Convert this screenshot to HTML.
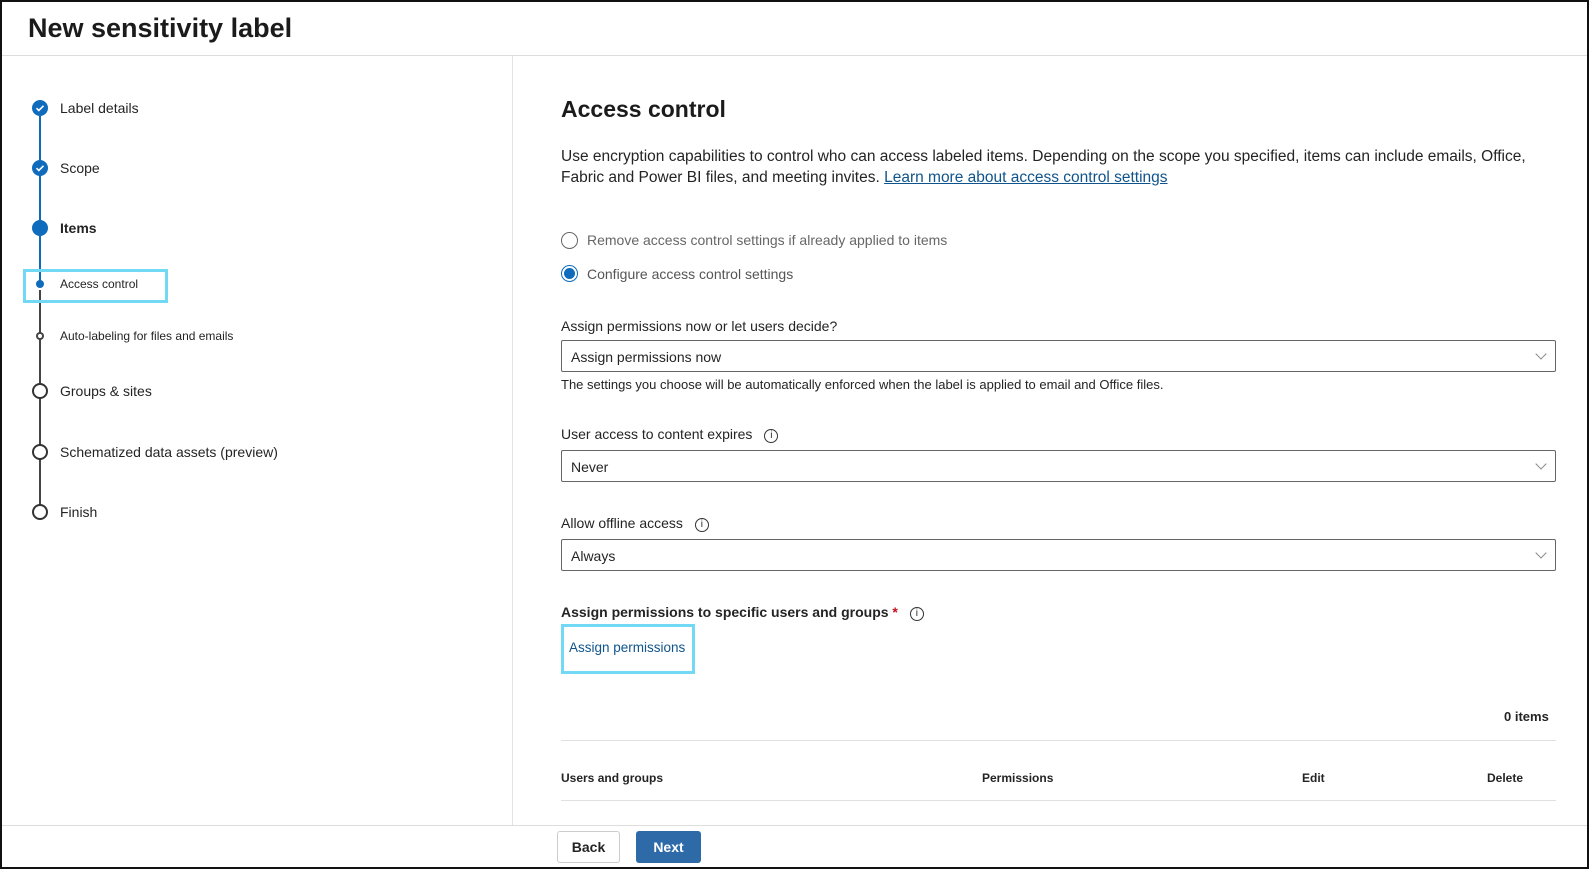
<!DOCTYPE html>
<html><head><meta charset="utf-8"><style>
*{margin:0;padding:0;box-sizing:border-box}
body{width:1589px;height:869px;position:relative;background:#fff;font-family:"Liberation Sans",sans-serif;color:#242424;overflow:hidden}
.frame{position:absolute;left:0;top:0;width:1589px;height:869px;border:2px solid #111;border-right-width:2px}
.abs{position:absolute;white-space:nowrap}
.hl{position:absolute;border:3px solid #72d9f4}
.circ{position:absolute;border-radius:50%}
.dd{position:absolute;left:561px;width:995px;height:32px;border:1px solid #666;border-radius:2px;font-size:14px;padding:8px 9px}
.dd:after{content:"";position:absolute;right:10px;top:9px;width:7px;height:7px;border-right:1px solid #888;border-bottom:1px solid #888;transform:rotate(45deg)}
.info{display:inline-block;width:14px;height:14px;border:1px solid #333;border-radius:50%;font-size:10px;text-align:center;line-height:12px;vertical-align:1px;margin-left:12px}
</style></head><body>
<div class="frame"></div>
<div class="abs" style="left:28px;top:13px;font-size:27px;font-weight:bold;color:#1b1b1b">New sensitivity label</div>
<div class="abs" style="left:2px;top:55px;width:1585px;height:1px;background:#ddd"></div>
<div class="abs" style="left:512px;top:56px;width:1px;height:770px;background:#e3e3e3"></div>
<div class="abs" style="left:2px;top:825px;width:1585px;height:1px;background:#ddd"></div>

<!-- steps -->
<div class="abs" style="left:39px;top:116px;width:2px;height:168px;background:#0f6cbd"></div>
<div class="abs" style="left:39px;top:290px;width:2px;height:222px;background:#444"></div>
<div class="circ" style="left:32px;top:100px;width:16px;height:16px;background:#0f6cbd"></div>
<svg class="abs" style="left:35px;top:103px" width="10" height="10"><path d="M1.5 5.2l2.3 2.3 4.7-4.7" stroke="#fff" stroke-width="1.6" fill="none"/></svg>
<div class="circ" style="left:32px;top:160px;width:16px;height:16px;background:#0f6cbd"></div>
<svg class="abs" style="left:35px;top:163px" width="10" height="10"><path d="M1.5 5.2l2.3 2.3 4.7-4.7" stroke="#fff" stroke-width="1.6" fill="none"/></svg>
<div class="circ" style="left:32px;top:220px;width:16px;height:16px;background:#0f6cbd"></div>
<div class="circ" style="left:36px;top:280px;width:8px;height:8px;background:#0f6cbd"></div>
<div class="circ" style="left:36px;top:332px;width:8px;height:8px;background:#fff;border:2px solid #444"></div>
<div class="circ" style="left:32px;top:383px;width:16px;height:16px;background:#fff;border:2px solid #333"></div>
<div class="circ" style="left:32px;top:444px;width:16px;height:16px;background:#fff;border:2px solid #333"></div>
<div class="circ" style="left:32px;top:504px;width:16px;height:16px;background:#fff;border:2px solid #333"></div>
<div class="abs" style="left:60px;top:100px;font-size:14px">Label details</div>
<div class="abs" style="left:60px;top:160px;font-size:14px">Scope</div>
<div class="abs" style="left:60px;top:220px;font-size:14px;font-weight:bold">Items</div>
<div class="abs" style="left:60px;top:277px;font-size:12px">Access control</div>
<div class="abs" style="left:60px;top:329px;font-size:12px">Auto-labeling for files and emails</div>
<div class="abs" style="left:60px;top:383px;font-size:14px">Groups &amp; sites</div>
<div class="abs" style="left:60px;top:444px;font-size:14px">Schematized data assets (preview)</div>
<div class="abs" style="left:60px;top:504px;font-size:14px">Finish</div>
<div class="hl" style="left:23px;top:269px;width:145px;height:34px"></div>

<!-- right -->
<div class="abs" style="left:561px;top:96px;font-size:23px;font-weight:bold;color:#1b1b1b">Access control</div>
<div class="abs" style="left:561px;top:146px;font-size:15.5px;line-height:21px">Use encryption capabilities to control who can access labeled items. Depending on the scope you specified, items can include emails, Office,<br>Fabric and Power BI files, and meeting invites. <span style="color:#0f548c;text-decoration:underline">Learn more about access control settings</span></div>
<div class="circ" style="left:561px;top:232px;width:17px;height:17px;border:1px solid #666"></div>
<div class="abs" style="left:587px;top:232px;font-size:14px;color:#666">Remove access control settings if already applied to items</div>
<div class="circ" style="left:561px;top:265px;width:17px;height:17px;border:1px solid #0f6cbd"></div>
<div class="circ" style="left:564px;top:268px;width:11px;height:11px;background:#0f6cbd"></div>
<div class="abs" style="left:587px;top:266px;font-size:14px;color:#555">Configure access control settings</div>
<div class="abs" style="left:561px;top:318px;font-size:14px">Assign permissions now or let users decide?</div>
<div class="dd" style="top:340px">Assign permissions now</div>
<div class="abs" style="left:561px;top:377px;font-size:13px">The settings you choose will be automatically enforced when the label is applied to email and Office files.</div>
<div class="abs" style="left:561px;top:426px;font-size:14px">User access to content expires<span class="info">i</span></div>
<div class="dd" style="top:450px">Never</div>
<div class="abs" style="left:561px;top:515px;font-size:14px">Allow offline access<span class="info">i</span></div>
<div class="dd" style="top:539px">Always</div>
<div class="abs" style="left:561px;top:604px;font-size:14px;font-weight:bold">Assign permissions to specific users and groups <span style="color:#c50f1f">*</span><span class="info" style="font-weight:normal">i</span></div>
<div class="hl" style="left:561px;top:624px;width:134px;height:50px"></div>
<div class="abs" style="left:569px;top:640px;font-size:13.5px;color:#0f548c">Assign permissions</div>
<div class="abs" style="left:1504px;top:709px;font-size:13px;font-weight:bold">0 items</div>
<div class="abs" style="left:561px;top:740px;width:995px;height:1px;background:#e0e0e0"></div>
<div class="abs" style="left:561px;top:771px;font-size:12px;font-weight:bold">Users and groups</div>
<div class="abs" style="left:982px;top:771px;font-size:12px;font-weight:bold">Permissions</div>
<div class="abs" style="left:1302px;top:771px;font-size:12px;font-weight:bold">Edit</div>
<div class="abs" style="left:1487px;top:771px;font-size:12px;font-weight:bold">Delete</div>
<div class="abs" style="left:561px;top:800px;width:995px;height:1px;background:#e0e0e0"></div>

<div class="abs" style="left:557px;top:831px;width:63px;height:32px;border:1px solid #ccc;border-radius:3px;font-size:14px;font-weight:bold;text-align:center;line-height:30px">Back</div>
<div class="abs" style="left:636px;top:831px;width:65px;height:32px;background:#2f6aa8;border-radius:3px;font-size:14px;font-weight:bold;color:#fff;text-align:center;line-height:32px">Next</div>
</body></html>
